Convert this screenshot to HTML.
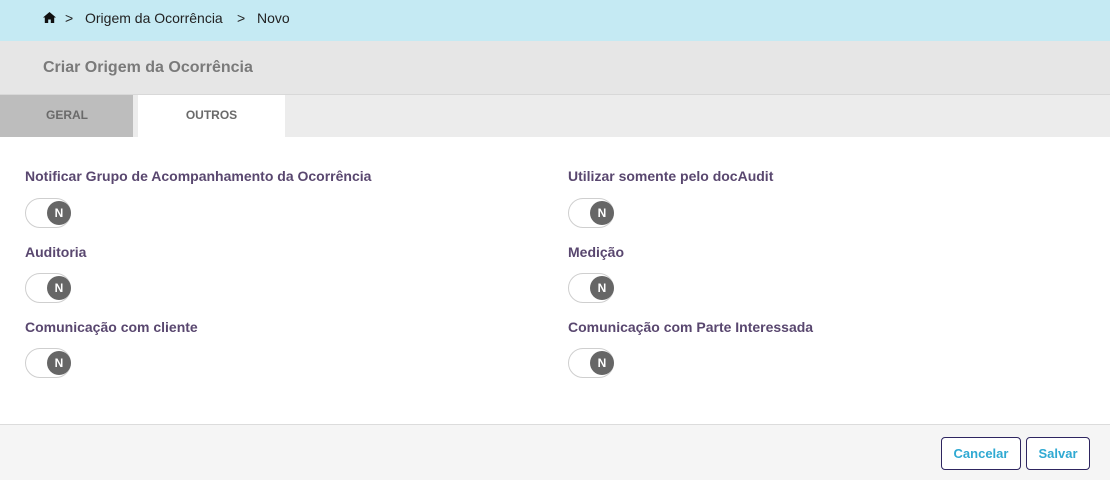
<!DOCTYPE html>
<html><head><meta charset="utf-8"><style>
*{margin:0;padding:0;box-sizing:border-box}
body{width:1110px;height:480px;font-family:"Liberation Sans","DejaVu Sans",sans-serif;background:#fff;position:relative;overflow:hidden}
.bc{position:absolute;left:0;top:0;width:1110px;height:41px;background:#c5eaf3;font-size:14px;color:#222}
.bc span{position:absolute;top:10px}
.hd{position:absolute;left:0;top:41px;width:1110px;height:54px;background:#e6e6e6;border-bottom:1px solid #d8d8d8}
.hd div{position:absolute;left:43px;top:18px;font-size:16px;font-weight:bold;color:#7a7a7a}
.tabs{position:absolute;left:0;top:95px;width:1110px;height:42px;background:#ececec}
.tab{position:absolute;top:0;height:42px;font-size:12px;font-weight:bold;color:#6a6a6a;text-align:center;line-height:40px}
.lbl{position:absolute;font-size:14px;font-weight:bold;color:#59476f}
.tg{position:absolute;width:46px;height:30px;border:1px solid #cfcfcf;border-radius:15px;background:#fff}
.tg i{position:absolute;left:21px;top:2px;width:24px;height:24px;border-radius:50%;background:#666;color:#fff;font-style:normal;font-weight:bold;font-size:12px;text-align:center;line-height:24px}
.ft{position:absolute;left:0;top:424px;width:1110px;height:56px;background:#f5f5f5;border-top:1px solid #dcdcdc}
.btn{position:absolute;top:437px;height:33px;border:1px solid #2e2560;border-radius:4px;background:#fff;color:#2fa9d2;font-size:13px;font-weight:bold;text-align:center;line-height:31px}
</style></head><body>
<div class="bc">
<svg style="position:absolute;left:43px;top:12px" width="13" height="11" viewBox="0 0 13 11"><path d="M6.5 0L0 5.5h1.8V11h3.4V7.5h2.6V11h3.4V5.5H13z" fill="#111"/></svg>
<span style="left:65px">&gt;</span><span style="left:85px">Origem da Ocorrência</span><span style="left:237px">&gt;</span><span style="left:257px">Novo</span></div>
<div class="hd"><div>Criar Origem da Ocorrência</div></div>
<div class="tabs">
<div class="tab" style="left:0;width:133px;background:#bdbdbd;padding-right:0;text-align:left;padding-left:46px">GERAL</div>
<div class="tab" style="left:138px;width:147px;background:#fff">OUTROS</div>
</div>
<div class="lbl" style="left:25px;top:168px">Notificar Grupo de Acompanhamento da Ocorrência</div>
<div class="tg" style="left:25px;top:198px"><i>N</i></div>
<div class="lbl" style="left:25px;top:244px">Auditoria</div>
<div class="tg" style="left:25px;top:273px"><i>N</i></div>
<div class="lbl" style="left:25px;top:319px">Comunicação com cliente</div>
<div class="tg" style="left:25px;top:348px"><i>N</i></div>
<div class="lbl" style="left:568px;top:168px">Utilizar somente pelo docAudit</div>
<div class="tg" style="left:568px;top:198px"><i>N</i></div>
<div class="lbl" style="left:568px;top:244px">Medição</div>
<div class="tg" style="left:568px;top:273px"><i>N</i></div>
<div class="lbl" style="left:568px;top:319px">Comunicação com Parte Interessada</div>
<div class="tg" style="left:568px;top:348px"><i>N</i></div>
<div class="ft"></div>
<div class="btn" style="left:941px;width:80px">Cancelar</div>
<div class="btn" style="left:1026px;width:64px">Salvar</div>
</body></html>
